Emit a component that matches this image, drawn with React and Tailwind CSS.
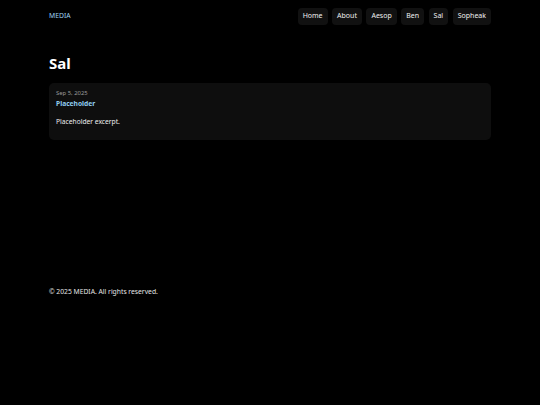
export default function App() {
  const nav = ["Home", "About", "Aesop", "Ben", "Sal", "Sopheak"];
  return (
    <div className="min-h-[405px] bg-black text-[#e5e5e5]" style={{ fontFamily: '"Noto Sans", sans-serif' }}>
      <div className="mx-auto w-[442px]">
        <header className="flex items-center justify-between pt-[8px]">
          <span className="text-[6.8px] text-[#9fd3f2]">MEDIA</span>
          <nav className="flex gap-[4.5px]">
            {nav.map((n) => (
              <span key={n} className="flex h-[17px] items-center rounded-[4px] bg-[#111111] px-[5px] text-[7px] text-[#f0f0f0]">
                {n}
              </span>
            ))}
          </nav>
        </header>
        <main className="h-[261px] pt-[29px]">
          <h1 className="text-[15px] font-bold leading-[18px] text-white">Sal</h1>
          <div className="mt-[11px] h-[57px] rounded-[5px] bg-[#0e0e0e] px-[7px] pt-[6px]">
            <div className="text-[5.9px] leading-[9px] text-[#9a9a9a]">Sep 5, 2025</div>
            <div className="text-[6.7px] font-bold leading-[11px] text-[#8fcbee]">Placeholder</div>
            <p className="mt-[7px] text-[6.7px] leading-[11px] text-[#eeeeee]">Placeholder excerpt.</p>
          </div>
        </main>
        <footer className="text-[6.75px] leading-[11px] text-[#e5e5e5]">© 2025 MEDIA. All rights reserved.</footer>
      </div>
    </div>
  );
}
